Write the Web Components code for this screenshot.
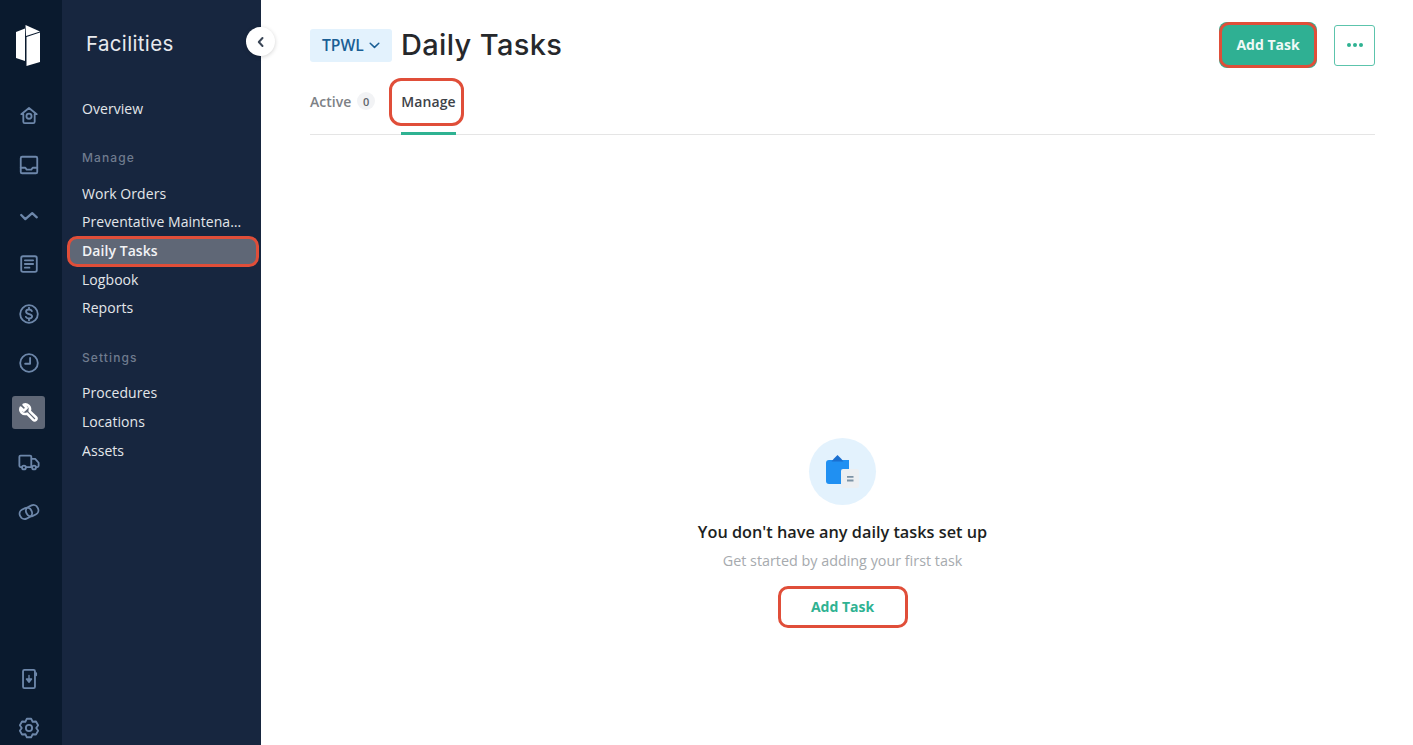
<!DOCTYPE html>
<html lang="en">
<head>
<meta charset="utf-8">
<title>Daily Tasks</title>
<style>
  html, body { margin: 0; height: 100%; }
  body { font-family: "Open Sans", "Liberation Sans", sans-serif; background: #fff; overflow: hidden; }
</style>
</head>
<body>
<app-shell>
  <icon-rail slot="rail"></icon-rail>
  <side-nav slot="nav"></side-nav>
  <tasks-page slot="main"></tasks-page>
</app-shell>

<script>
// gear outline: six teeth around the centre of the 24x24 box
function gearPath() {
  const pts = [];
  for (let k = 0; k < 6; k++) {
    const a = -90 + k * 60;
    [[a - 13, 10.4], [a + 13, 10.4], [a + 30, 7.9]].forEach(([deg, r]) => {
      const t = deg * Math.PI / 180;
      pts.push((12 + r * Math.cos(t)).toFixed(2) + ' ' + (12 + r * Math.sin(t)).toFixed(2));
    });
  }
  return 'M' + pts.join('L') + 'z';
}

// icon paths, all drawn on a 24x24 box
const ICONS = {
  home: '<path d="M12 3.2 3.6 10h2.2v8.2a1.6 1.6 0 0 0 1.6 1.6h9.2a1.6 1.6 0 0 0 1.6-1.6V10h2.2z"/><circle cx="12" cy="12.2" r="2.8"/>',
  inbox: '<rect x="3" y="3" width="18" height="18" rx="1.5"/><path d="M3 15h5l1.500 2h5l1.500-2h5"/>',
  pulse: '<path d="M3.500 12 8 16.500 15.500 10 20.500 14.500" stroke-width="2.500"/>',
  doc: '<rect x="3.500" y="3.500" width="17" height="17" rx="2"/><path d="M7.500 8h9M7.500 12h9M7.500 16h5" stroke-width="2"/>',
  dollar: '<circle cx="12" cy="12" r="9.600"/><path d="M15.200 8.800c-.6-1.100-1.800-1.700-3.200-1.700-1.800 0-3.200 1-3.200 2.400 0 3.300 6.600 1.800 6.600 5 0 1.400-1.500 2.400-3.400 2.400-1.500 0-2.800-.7-3.400-1.800M12 5v2M12 17.500V19"/>',
  clock: '<circle cx="12" cy="12" r="9.600"/><path d="M13.200 6.500v6.300H7.800"/>',
  wrench: '<path d="M19.600 19.600c-.9.900-2.100.9-3 0l-6.700-6.900c-2 .8-4.300.4-5.900-1.200C2.600 10 2.200 7.900 2.900 6.100L6.400 9.500 9.500 6.400 6.100 2.900C7.900 2.200 10 2.600 11.500 4c1.600 1.600 2 3.900 1.200 5.900l6.900 6.700c.9.900.9 2.100 0 3z"/>',
  truck: '<path d="M14.500 17.500H9M4 17.500H2.800A1.300 1.300 0 0 1 1.500 16.200V6.300A1.300 1.300 0 0 1 2.800 5h10.400a1.300 1.300 0 0 1 1.300 1.300v11.200M14.500 8.500h4.200l3.800 4.300v3.400a1.300 1.300 0 0 1-1.300 1.300h-1.200"/><circle cx="6.500" cy="18" r="2.100"/><circle cx="17.500" cy="18" r="2.100"/>',
  shake: '<rect x="1.800" y="8" width="13.500" height="11" rx="5" transform="rotate(-25 8.500 13.500)"/><rect x="8.700" y="5" width="13.500" height="11" rx="5" transform="rotate(-25 15.500 10.500)"/>',
  phone: '<rect x="5.500" y="2" width="13" height="20" rx="1.500"/><path d="M19.800 5.500v2.500"/><path d="M12 8v4M9.200 12h5.600L12 15.500z" fill="currentColor" stroke-width="1.500"/>',
  gear: `<path d="${gearPath()}"/><circle cx="12" cy="12" r="3.400"/>`
};

class RailIcon extends HTMLElement {
  connectedCallback() {
    const active = this.hasAttribute('active');
    const size = this.getAttribute('size') || 22;
    this.attachShadow({ mode: 'open' }).innerHTML = `
      <style>
        :host { display: flex; align-items: center; justify-content: center; width: 33px; height: 33px; border-radius: 3px; color: #6d87aa; }
        :host([active]) { background: #5f6776; color: #fff; }
        svg { display: block; fill: none; stroke: currentColor; stroke-width: ${active ? 2.8 : 2}; stroke-linecap: round; stroke-linejoin: round; }
      </style>
      <svg width="${size}" height="${size}" viewBox="0 0 24 24">${ICONS[this.getAttribute('name')]}</svg>`;
  }
}
customElements.define('rail-icon', RailIcon);

class IconRail extends HTMLElement {
  constructor() {
    super();
    const top = ['home', 'inbox', 'pulse', 'doc', 'dollar', 'clock', 'wrench', 'truck', 'shake'];
    this.attachShadow({ mode: 'open' }).innerHTML = `
      <style>
        :host { display: flex; flex-direction: column; align-items: center; width: 62px; height: 100%; background: #0a1a2e; box-sizing: border-box; padding: 25px 5px 0 0; }
        .logo { display: block; margin-bottom: 33px; }
        .list { display: flex; flex-direction: column; gap: 16.500px; }
        .bottom { margin-top: auto; padding-bottom: 1px; display: flex; flex-direction: column; gap: 16px; }
      </style>
      <svg class="logo" width="25" height="41" viewBox="0 0 25 41" fill="#fff">
        <path d="M0 7 9 3.500V36L0 33z"/>
        <path d="M9.500 0 24 6.500 10 11z"/>
        <path d="M10.500 12 24 7.500V37L10.500 41z"/>
      </svg>
      <div class="list">
        ${top.map(n => `<rail-icon name="${n}"${n === 'wrench' ? ' active' : ''}></rail-icon>`).join('')}
      </div>
      <div class="bottom">
        <rail-icon name="phone"></rail-icon>
        <rail-icon name="gear"></rail-icon>
      </div>`;
  }
}
customElements.define('icon-rail', IconRail);

class NavItem extends HTMLElement {
  constructor() {
    super();
    this.attachShadow({ mode: 'open' }).innerHTML = `
      <style>
        :host { display: block; position: relative; height: 28.700px; line-height: 28.700px; padding-left: 14px; margin: 0 3px 0 0; font-size: 14px; letter-spacing: .06px; color: #e3e6ea; white-space: nowrap; }
        .txt { display: block; overflow: hidden; text-overflow: ellipsis; width: 163px; }
        :host([active]) { background: #5f6776; border-radius: 8px; font-weight: 600; color: #f2f3f5; }
        :host([active])::after { content: ""; position: absolute; inset: -1px; border: 3px solid #e04e39; border-radius: 10px; }
      </style>
      <span class="txt"><slot></slot></span>`;
  }
}
customElements.define('nav-item', NavItem);

class SideNav extends HTMLElement {
  constructor() {
    super();
    this.attachShadow({ mode: 'open' }).innerHTML = `
      <style>
        :host { display: block; position: relative; width: 199px; height: 100%; background: #17263f; box-sizing: border-box; padding: 27px 0 0 6px; }
        h2 { margin: 0 0 34px 18px; font: 400 20.500px/34px Inter, "Noto Sans", sans-serif; letter-spacing: .35px; color: #e8eaee; }
        h3 { margin: 0 0 14px; padding-left: 14px; font: 500 12px/16px Inter, "Noto Sans", sans-serif; letter-spacing: 1.100px; color: #6f7b8e; }
        .settings h3 { margin-bottom: 13px; }
        .group { margin-bottom: 26px; }
        .group + .group { margin-bottom: 27px; }
        .toggle { position: absolute; top: 27px; right: -14px; width: 29px; height: 29px; border-radius: 50%; background: #fff; box-shadow: 0 1px 4px rgba(0,0,0,.18); display: flex; align-items: center; justify-content: center; }
      </style>
      <h2>Facilities</h2>
      <div class="group"><nav-item>Overview</nav-item></div>
      <div class="group">
        <h3>Manage</h3>
        <nav-item>Work Orders</nav-item>
        <nav-item>Preventative Maintenance</nav-item>
        <nav-item active>Daily Tasks</nav-item>
        <nav-item>Logbook</nav-item>
        <nav-item>Reports</nav-item>
      </div>
      <div class="group settings">
        <h3>Settings</h3>
        <nav-item>Procedures</nav-item>
        <nav-item>Locations</nav-item>
        <nav-item>Assets</nav-item>
      </div>
      <div class="toggle">
        <svg width="12" height="12" viewBox="0 0 12 12" fill="none" stroke="#3a4656" stroke-width="2" stroke-linecap="round" stroke-linejoin="round"><path d="M7.500 2 3.800 6l3.700 4"/></svg>
      </div>`;
  }
}
customElements.define('side-nav', SideNav);

class TaskButton extends HTMLElement {
  constructor() {
    super();
    this.attachShadow({ mode: 'open' }).innerHTML = `
      <style>
        :host { display: inline-flex; align-items: center; justify-content: center; position: relative; box-sizing: border-box; padding-bottom: 2px; border-radius: 8px; font-size: 14px; font-weight: 700; color: #2fb292; background: #fff; }
        :host([primary]) { background: #2fb093; color: #eef9f6; }
        :host::after { content: ""; position: absolute; inset: 0; border: 3px solid #e04e39; border-radius: 10px; }
      </style>
      <slot></slot>`;
  }
}
customElements.define('task-button', TaskButton);

class EmptyState extends HTMLElement {
  constructor() {
    super();
    this.attachShadow({ mode: 'open' }).innerHTML = `
      <style>
        :host { display: flex; flex-direction: column; align-items: center; padding-top: 303px; }
        .badge { width: 67px; height: 67px; border-radius: 50%; background: #e3f2fd; display: flex; align-items: center; justify-content: center; }
        h4 { margin: 6px 0 0; font-size: 16.300px; line-height: 43px; font-weight: 600; color: #1d1f22; }
        p { margin: 0 0 18px; font-size: 14.350px; line-height: 14px; color: #a6aaae; }
        task-button { width: 130px; height: 42px; }
      </style>
      <div class="badge">
        <svg width="33" height="33" viewBox="0 0 33 33">
          <path d="M3 5h20v23a1 1 0 0 1-1 1H3a3 3 0 0 1-3-3V8a3 3 0 0 1 3-3z" fill="#2090f2"/>
          <path d="M5.500 6.500h12L15 3.500 11.500 0 8 3.500z" fill="#1a6fd0"/>
          <rect x="15" y="14" width="18" height="19" rx="2" fill="#eceff2"/>
          <path d="M21 21.800h6.500M21 25.500h6.500" stroke="#7d93a5" stroke-width="1.800"/>
        </svg>
      </div>
      <h4>You don't have any daily tasks set up</h4>
      <p>Get started by adding your first task</p>
      <task-button>Add Task</task-button>`;
  }
}
customElements.define('empty-state', EmptyState);

class TasksPage extends HTMLElement {
  constructor() {
    super();
    this.attachShadow({ mode: 'open' }).innerHTML = `
      <style>
        :host { display: block; flex: 1; min-width: 0; box-sizing: border-box; padding: 0 38px 0 49px; height: 100%; }
        header { display: flex; align-items: center; height: 90px; }
        .chip { display: flex; align-items: center; gap: 5px; width: 82px; height: 33px; box-sizing: border-box; padding-left: 12px; border-radius: 3px; background: #e3f2fd; color: #1a5f95; font-size: 15.700px; font-weight: 600; }
        h1 { margin: -2px 0 0 9px; font: 500 29px/1 Inter, "Noto Sans", sans-serif; letter-spacing: .35px; color: #26282b; }
        .actions { margin-left: auto; display: flex; align-items: center; gap: 17px; }
        .actions task-button { width: 98px; height: 46px; }
        .more { width: 41px; height: 41px; box-sizing: border-box; border: 1.500px solid #5cc4ac; border-radius: 3px; display: flex; align-items: center; justify-content: center; gap: 2px; }
        .more i { width: 4px; height: 4px; border-radius: 50%; background: #2fb292; }
        nav { display: flex; align-items: stretch; height: 44px; border-bottom: 1px solid #e5e5e5; font-size: 14px; font-weight: 600; }
        .tab { display: flex; align-items: center; box-sizing: border-box; padding-bottom: 22px; position: relative; color: #7d8186; }
        .count { width: 18px; height: 18px; border-radius: 50%; margin-left: 6px; background: #f2f3f5; color: #60656b; font-size: 11px; display: flex; align-items: center; justify-content: center; }
        .current { color: #3d4248; margin-left: 26px; letter-spacing: .12px; border-bottom: 3px solid #2fb292; height: 45px; padding-bottom: 19px; }
        .current::after { content: ""; position: absolute; left: -12px; right: -8.500px; top: -12px; height: 48px; border: 3px solid #e04e39; border-radius: 12px; box-sizing: border-box; }
      </style>
      <header>
        <div class="chip">TPWL
          <svg width="11" height="7" viewBox="0 0 11 7" fill="none" stroke="#1a5f95" stroke-width="1.500" stroke-linecap="round" stroke-linejoin="round"><path d="M1.200 1.200 5.500 5.400l4.300-4.200"/></svg>
        </div>
        <h1>Daily Tasks</h1>
        <div class="actions">
          <task-button primary>Add Task</task-button>
          <div class="more"><i></i><i></i><i></i></div>
        </div>
      </header>
      <nav>
        <div class="tab">Active <span class="count">0</span></div>
        <div class="tab current">Manage</div>
      </nav>
      <empty-state></empty-state>`;
  }
}
customElements.define('tasks-page', TasksPage);

class AppShell extends HTMLElement {
  constructor() {
    super();
    this.attachShadow({ mode: 'open' }).innerHTML = `
      <style>
        :host { display: flex; width: 100%; height: 100vh; overflow: hidden; }
        ::slotted([slot="nav"]) { z-index: 1; }
      </style>
      <slot name="rail"></slot>
      <slot name="nav"></slot>
      <slot name="main"></slot>`;
  }
}
customElements.define('app-shell', AppShell);
</script>
</body>
</html>
